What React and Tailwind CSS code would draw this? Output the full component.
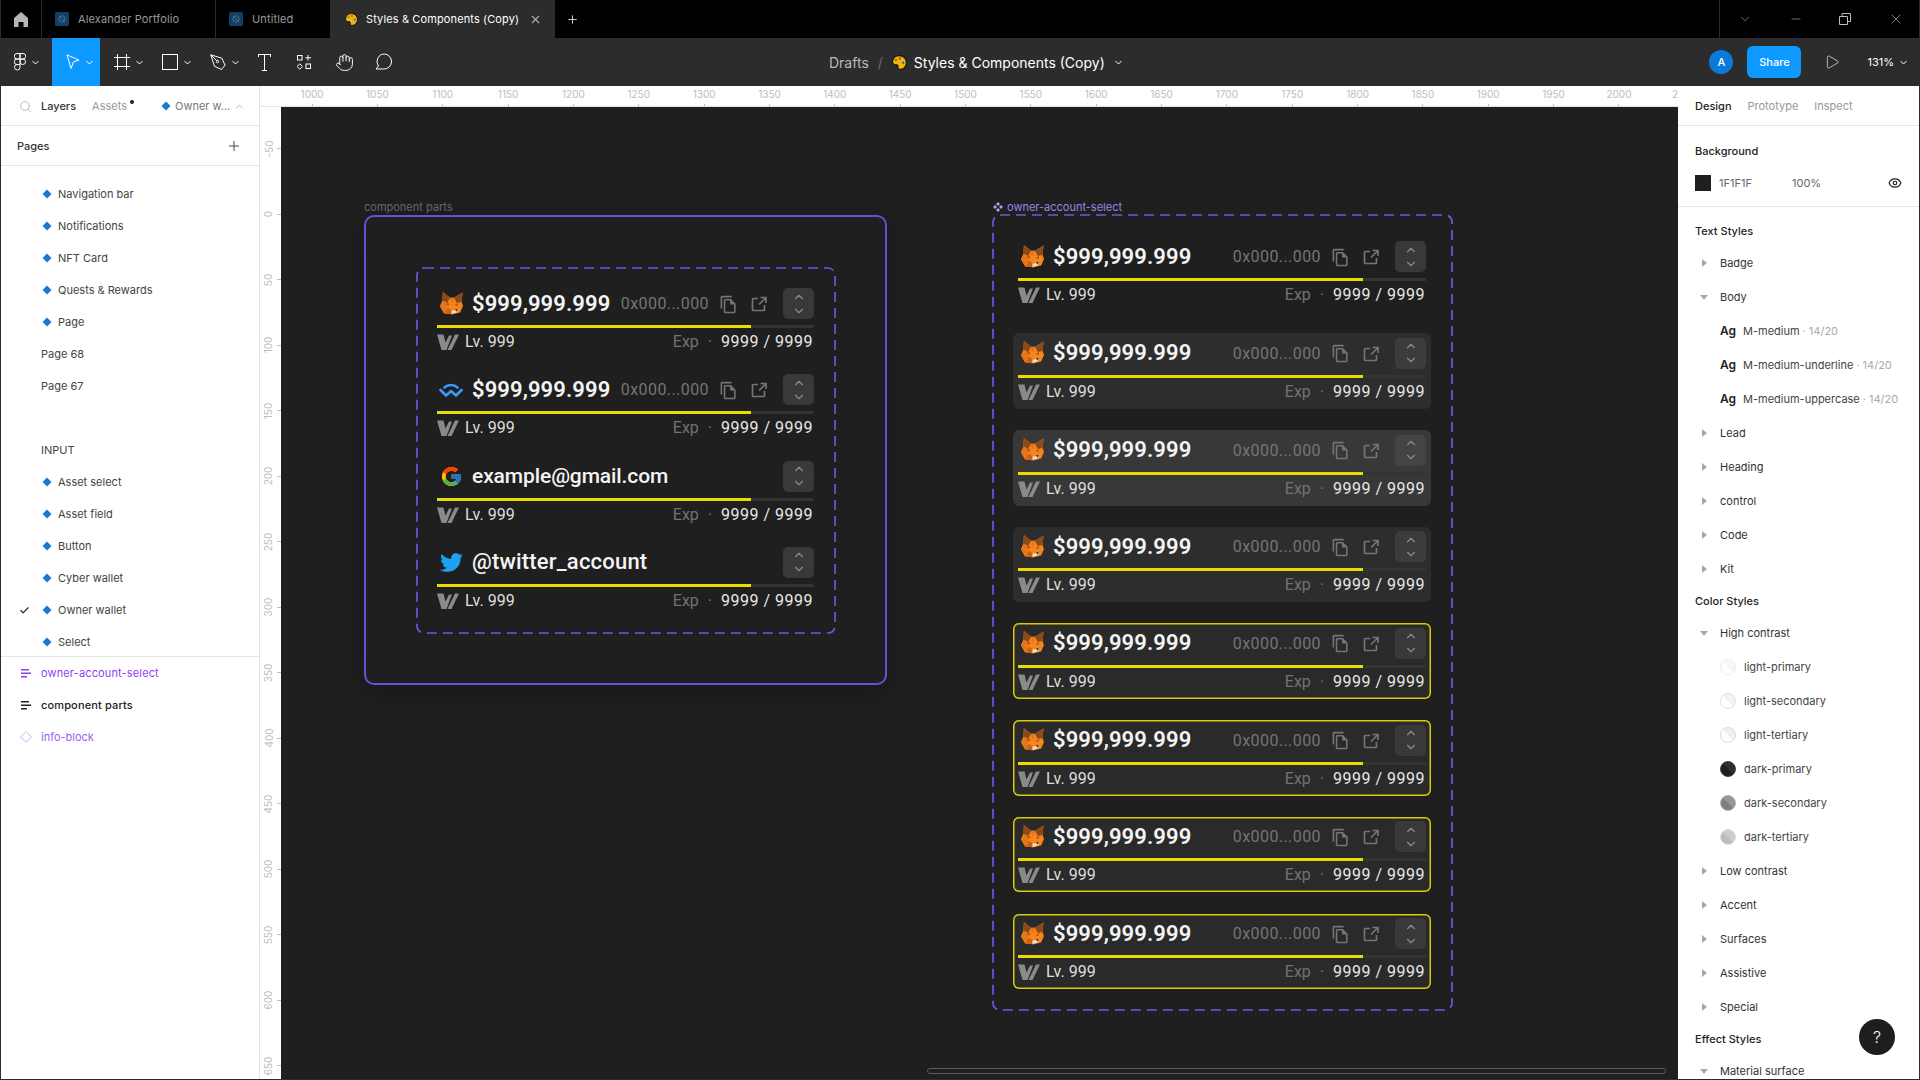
import { ChevronDown, ChevronUp, Check, Eye, Hand, Minus, Play, Plus, Search, X } from 'lucide-react';
import { FaTwitter } from 'react-icons/fa';
import { FcGoogle } from 'react-icons/fc';
import { MdOutlineFileCopy } from 'react-icons/md';

const pages = [
  { name: 'Navigation bar', icon: true },
  { name: 'Notifications', icon: true },
  { name: 'NFT Card', icon: true },
  { name: 'Quests & Rewards', icon: true },
  { name: 'Page', icon: true },
  { name: 'Page 68' },
  { name: 'Page 67' },
  { name: '' },
  { name: 'INPUT' },
  { name: 'Asset select', icon: true },
  { name: 'Asset field', icon: true },
  { name: 'Button', icon: true },
  { name: 'Cyber wallet', icon: true },
  { name: 'Owner wallet', icon: true, checked: true },
  { name: 'Select', icon: true },
];

const rulerX = [];
for (let v = 1000; v <= 2050; v += 50) rulerX.push(v);
const rulerY = [];
for (let v = -50; v <= 650; v += 50) rulerY.push(v);

const selected = 'bg-[#2a2a2a] ring-[1.5px] ring-inset ring-[#d8ca0c]';
const rowStates = [
  { row: '', stepper: 'bg-[#393939]' },
  { row: 'bg-[#2d2d2d]', stepper: 'bg-[#3c3c3c]' },
  { row: 'bg-[#383838]', stepper: 'bg-[#444444]' },
  { row: 'bg-[#2d2d2d]', stepper: 'bg-[#3c3c3c]' },
  { row: selected, stepper: 'bg-[#393939]' },
  { row: selected, stepper: 'bg-[#393939]' },
  { row: selected, stepper: 'bg-[#393939]' },
  { row: selected, stepper: 'bg-[#393939]' },
];

function Caret({ className = '' }) {
  return (
    <svg width="7" height="5" viewBox="0 0 7 5" className={`shrink-0 ${className}`} fill="none" stroke="currentColor" strokeWidth="1">
      <path d="M0.5 1l3 3 3-3" />
    </svg>
  );
}

function Diamond({ size = 10, fill = '#1b78d0', stroke = 'none' }) {
  return (
    <svg width={size} height={size} viewBox="0 0 10 10" className="shrink-0">
      <path d="M5 0.5L9.5 5 5 9.5 0.5 5z" fill={fill} stroke={stroke} strokeWidth="0.9" />
    </svg>
  );
}

function Palette({ size = 14 }) {
  return (
    <svg width={size} height={size} viewBox="0 0 14 14" className="shrink-0">
      <path d="M7 .6C3 .6.6 3.2.6 6.4c0 2.4 1.8 3 3.2 2.8 1.2-.2 2 .3 1.8 1.5-.3 1.4.3 2.7 2 2.7 3.5 0 5.8-3 5.8-6.4S10.700.6 7 .6z" fill="#f5b50a" stroke="#111" strokeWidth="1" />
      <circle cx="7.400" cy="3.200" r="1.100" fill="#d8342b" />
      <circle cx="3.800" cy="4.600" r="1.100" fill="#2e9e4a" />
      <circle cx="10.400" cy="7.200" r="1.200" fill="#2b6fd6" />
    </svg>
  );
}

function FileIcon() {
  return (
    <svg width="14" height="14" viewBox="0 0 14 14" className="shrink-0">
      <rect width="14" height="14" rx="1.500" fill="#123f66" />
      <circle cx="7" cy="7" r="3.200" fill="none" stroke="#4a6f8c" strokeWidth="1" />
      <path d="M4 4l6 6" stroke="#4a6f8c" strokeWidth="1" />
    </svg>
  );
}

function Tool({ active, children }) {
  return (
    <div className={`flex h-12 w-12 items-center gap-[6px] pl-[14px] text-white ${active ? 'bg-[#0d99ff]' : ''}`}>
      {children}
      <Caret />
    </div>
  );
}

function Fox() {
  return (
    <svg width="23" height="24" viewBox="0 0 24 24" className="-mt-[2px] shrink-0">
      <path d="M3 .5l7.500 6h4L23.500 1l-1 10 1.500 4-3 7-8.500 2-8.500-1.500L0 15.500 2.500 10z" fill="#f6851b" />
      <path d="M3 .5l7.500 6-3 5.500-5-2z" fill="#8a4a1c" />
      <path d="M23.500 1l-9 5.500 3 5.500 5-1z" fill="#8a4a1c" />
      <path d="M10.500 6.500h4L13 12l-2-.5z" fill="#e2761b" />
      <path d="M0 15.500L2.500 10l3 .5L8 17l-3 6.500-1-1z" fill="#e4761b" />
      <path d="M5 23.500l3-6.500 3.500 2 .5 4.500z" fill="#cd6116" />
      <path d="M6 13l2.500-1.500L10 14l-2.500.5z" fill="#b8540f" />
      <path d="M16 13.500l3-1.500-.5 2.500-2 .5z" fill="#b8540f" />
      <path d="M12 20l7-1.500-1.500 3.500-5.500 1.500z" fill="#e6dcd2" />
      <path d="M15.500 18.800l3-.5-1 2.500z" fill="#222" />
    </svg>
  );
}

function WalletConnect() {
  return (
    <svg width="24" height="16" viewBox="0 0 24 16" className="shrink-0" fill="none" stroke="#3b99fc" strokeWidth="2.600" strokeLinecap="round" strokeLinejoin="round">
      <path d="M5.500 5.500c3.500-3.300 9.500-3.300 13 0" />
      <path d="M1.500 8l5.500 5.500L12 9l5 4.500L22.500 8" />
    </svg>
  );
}

function LevelMark() {
  return (
    <svg width="22" height="16" viewBox="0 0 22 16" className="shrink-0" fill="#8a8a8a">
      <path d="M0 .5h6.500l2 8 3.500-7h3L9.500 16h-5z" />
      <path d="M10.500 16L18 .5h4L14.500 16z" />
    </svg>
  );
}

function ExternalIcon() {
  return (
    <svg width="16" height="16" viewBox="0 0 16 16" className="shrink-0" fill="none" stroke="currentColor" strokeWidth="1.700">
      <path d="M7 2.500H2.500a1 1 0 00-1 1v10a1 1 0 001 1h10a1 1 0 001-1V9" />
      <path d="M8 8.500l6.500-6.500M9.500 1.500h5.500V7" />
    </svg>
  );
}

function Account({ icon, title, titleClass = 'text-[22px] font-semibold tracking-[.1px]', address = true, stepper = 'bg-[#393939]', className = '' }) {
  return (
    <div className={`flex h-[75.5px] flex-col rounded-md px-[5px] pt-[4.5px] ${className}`}>
      <div className="flex h-[31px] items-center">
        <div className="ml-[2px] flex w-[24px] shrink-0 items-center justify-center">{icon}</div>
        <span className={`ml-[9px] font-['Roboto',sans-serif] leading-[26px] whitespace-nowrap text-[#f4f4f4] ${titleClass}`}>{title}</span>
        {address && (
          <div className="mt-[1px] ml-auto flex items-center text-[#757575]">
            <span className="font-['Roboto',sans-serif] text-[16px] leading-5 tracking-[.42px]">0x000...000</span>
            <MdOutlineFileCopy className="ml-[10px] text-[19px]" />
            <div className="ml-[13px]"><ExternalIcon /></div>
            <div className="ml-[15px] w-[1px]" />
          </div>
        )}
        <div className={`${address ? 'ml-0' : 'ml-auto'} flex h-[31px] w-[31px] shrink-0 flex-col items-center justify-center rounded-[5px] text-[#8a8a8a] ${stepper}`}>
          <ChevronUp size={14} strokeWidth={2} />
          <ChevronDown size={14} strokeWidth={2} />
        </div>
      </div>
      <div className="mt-[6px] flex h-[3px]">
        <div className="flex-1 bg-[#eadc00]" />
        <div className="w-[63px] bg-[#343434]" />
      </div>
      <div className="mt-[6px] flex h-[16px] items-center font-['Roboto',sans-serif] text-[16px] leading-5">
        <LevelMark />
        <span className="ml-[6px] text-[#dedede]">Lv. 999</span>
        <span className="ml-auto text-[#727272]">Exp</span>
        <span className="mx-[9px] text-[#727272]">·</span>
        <span className="mr-[1px] tracking-[.5px] text-[#e8e8e8]">9999 / 9999</span>
      </div>
    </div>
  );
}

function DashedBox({ width, height, children, className = '' }) {
  return (
    <div className={`relative shrink-0 ${className}`}>
      <svg width={width} height={height} className="absolute top-0 left-0" fill="none">
        <rect x="1" y="1" width={width - 2} height={height - 2} rx="7" stroke="#6f58e0" strokeWidth="1.700" strokeDasharray="10 6" />
      </svg>
      {children}
    </div>
  );
}

function Triangle({ open }) {
  return open ? (
    <svg width="8" height="5" viewBox="0 0 8 5" className="shrink-0"><path d="M0 0h8L4 5z" fill="#a8a8a8" /></svg>
  ) : (
    <svg width="5" height="8" viewBox="0 0 5 8" className="ml-[1px] shrink-0"><path d="M0 0l5 4-5 4z" fill="#a8a8a8" /></svg>
  );
}

function StyleGroup({ name, open }) {
  return (
    <div className="flex h-[34px] items-center text-[#333]">
      <div className="flex w-[25px] justify-center pr-[7px]"><Triangle open={open} /></div>
      <span>{name}</span>
    </div>
  );
}

function TextStyle({ name }) {
  return (
    <div className="flex h-[34px] items-center pl-[25px] text-[#444]">
      <span className="w-[23px] text-[12px] font-semibold text-[#222]">Ag</span>
      <span>{name}</span>
      <span className="ml-[3px] text-[#aaa]">· 14/20</span>
    </div>
  );
}

function ColorStyle({ name, base, line }) {
  return (
    <div className="flex h-[34px] items-center pl-[25px] text-[#444]">
      <svg width="16" height="16" viewBox="0 0 16 16" className="mr-[8px] shrink-0">
        <circle cx="8" cy="8" r="7.500" fill={base} stroke={line} strokeWidth="1" />
        <path d="M8 1a7 7 0 014.950 11.950L3.050 3.050A7 7 0 018 1z" fill={line} opacity="0.45" />
      </svg>
      <span>{name}</span>
    </div>
  );
}

function Heading({ children }) {
  return <div className="flex h-[30px] items-center font-medium text-[#1e1e1e]">{children}</div>;
}

function ListIcon({ color }) {
  return (
    <svg width="10" height="9" viewBox="0 0 10 9" className="shrink-0" fill={color}>
      <rect width="8" height="1.500" />
      <rect y="3.500" width="10" height="1.500" />
      <rect y="7" width="6" height="1.500" />
    </svg>
  );
}

export default function App() {
  return (
    <div className="flex h-screen w-screen flex-col overflow-hidden border-x border-b border-[#2c2c2c] bg-white font-['Inter',sans-serif] text-[11px]">
      {/* tab strip */}
      <div className="flex h-[38px] shrink-0 items-center bg-black text-[11px] tracking-[.12px] text-[#9a9a9a]">
        <div className="flex h-full w-[41px] items-center justify-center border-r border-[#2c2c2c]">
          <svg width="14" height="15" viewBox="0 0 14 15" fill="#b5b5b5"><path d="M7 0l7 6v9H9.500v-5h-5v5H0V6z" /></svg>
        </div>
        <div className="flex h-full w-[174px] items-center gap-[9px] border-r border-[#2c2c2c] pl-[13px]">
          <FileIcon />
          <span>Alexander Portfolio</span>
        </div>
        <div className="flex h-full w-[114px] items-center gap-[9px] pl-[13px]">
          <FileIcon />
          <span>Untitled</span>
        </div>
        <div className="flex h-full w-[225px] items-center bg-[#2c2c2c] pl-[15px] text-white">
          <Palette size={13} />
          <span className="ml-[8px] whitespace-nowrap">Styles &amp; Components (Copy)</span>
          <X size={13} className="ml-[10px] text-[#b0b0b0]" />
        </div>
        <Plus size={13} className="ml-[11px] text-[#c8c8c8]" />
        <div className="ml-auto flex h-full w-[200px] items-center border-l border-[#2c2c2c] text-[#bdbdbd]">
          <ChevronDown size={14} strokeWidth={1} className="ml-[18px]" />
          <Minus size={14} strokeWidth={1} className="ml-[37px]" />
          <svg width="12" height="12" viewBox="0 0 12 12" className="ml-[36px]" fill="none" stroke="currentColor"><path d="M.5 3.500h8v8h-8zM3 3.500v-3h8.500v8h-3" /></svg>
          <X size={16} strokeWidth={1} className="ml-[37px]" />
        </div>
      </div>

      {/* toolbar */}
      <div className="flex h-12 shrink-0 items-center bg-[#2c2c2c] text-white">
        <div className="flex h-12 w-[51px] items-center gap-[6px] pl-[13px]">
          <svg width="12" height="18" viewBox="0 0 12 18" fill="none" stroke="white" strokeWidth="1">
            <path d="M6 .5H3a2.750 2.750 0 000 5.500h3zM6 .5h3A2.750 2.750 0 019 6H6zM6 6H3a2.750 2.750 0 000 5.500h3zM6 11.500H3A2.750 2.750 0 106 14.250zM6 8.750a2.750 2.750 0 105.500 0 2.750 2.750 0 10-5.500 0z" />
          </svg>
          <Caret />
        </div>
        <Tool active>
          <svg width="14" height="16" viewBox="0 0 14 16" fill="none" stroke="white"><path d="M1 .8l12 5.400-5.500 1.600L5 14.500z" /></svg>
        </Tool>
        <Tool>
          <svg width="16" height="16" viewBox="0 0 16 16" fill="none" stroke="white"><path d="M3.500 0v16M12.500 0v16M0 3.500h16M0 12.500h16" /></svg>
        </Tool>
        <Tool>
          <svg width="16" height="16" viewBox="0 0 16 16" fill="none" stroke="white"><rect x=".5" y=".5" width="15" height="15" /></svg>
        </Tool>
        <Tool>
          <svg width="16" height="17" viewBox="0 0 16 17" fill="none" stroke="white"><path d="M.8.800l11 3.400 3.200 7-3.500 4.300-7-3.200zM.8.800l6 6" /><circle cx="7.500" cy="7.500" r="1.200" /></svg>
        </Tool>
        <div className="flex w-10 justify-center">
          <svg width="13" height="17" viewBox="0 0 13 17" fill="none" stroke="white"><path d="M0 .5h13M6.500.5v16M4 16.500h5M.5 0v3M12.500 0v3" /></svg>
        </div>
        <div className="flex w-10 justify-center">
          <svg width="15" height="15" viewBox="0 0 15 15" fill="none" stroke="white"><rect x=".5" y=".5" width="4.500" height="4.500" /><path d="M11 0v5.500M8.500 2.750H14" /><path d="M2.750 8.800l2.700 2.700-2.700 2.700-2.700-2.700z" /><rect x="9" y="9" width="4.500" height="4.500" /></svg>
        </div>
        <div className="flex w-10 justify-center"><Hand size={19} strokeWidth={1.200} /></div>
        <div className="flex w-10 justify-center">
          <svg width="18" height="18" viewBox="0 0 18 18" fill="none" stroke="white"><path d="M9.500 1a7.500 7.500 0 11-1 15H1l2.500-3A7.500 7.500 0 019.500 1z" /></svg>
        </div>
        <div className="ml-[425px] flex items-center text-[14px]">
          <span className="text-[#b9b9b9]">Drafts</span>
          <span className="mx-[9px] text-[#6d6d6d]">/</span>
          <Palette size={15} />
          <span className="ml-[7px] whitespace-nowrap">Styles &amp; Components (Copy)</span>
          <Caret className="ml-[10px]" />
        </div>
        <div className="ml-auto flex items-center">
          <div className="flex h-6 w-6 items-center justify-center rounded-full bg-[#0c7ad9] text-[11px] font-medium">A</div>
          <div className="ml-[14px] flex h-8 w-[54px] items-center justify-center rounded-md bg-[#0d99ff] font-medium">Share</div>
          <Play size={16} strokeWidth={1} className="ml-[23px]" />
          <span className="ml-[27px]">131%</span>
          <Caret className="mr-[12px] ml-[6px]" />
        </div>
      </div>

      <div className="flex min-h-0 flex-1">
        {/* layers panel */}
        <div className="flex w-[259px] shrink-0 flex-col border-r border-[#e5e5e5]">
          <div className="flex h-[40px] shrink-0 items-center border-b border-[#e5e5e5] pt-[1px]">
            <Search size={13} strokeWidth={1.200} className="ml-[18px] text-[#999]" />
            <span className="ml-[9px] font-medium text-[#333]">Layers</span>
            <span className="ml-[16px] text-[#999]">Assets</span>
            <span className="mb-[8px] ml-[3px] h-[4px] w-[4px] rounded-full bg-[#222]" />
            <span className="ml-[27px]"><Diamond /></span>
            <span className="ml-[4px] text-[#777]">Owner w...</span>
            <ChevronUp size={11} className="ml-[4px] text-[#aaa]" />
          </div>
          <div className="flex h-[40px] shrink-0 items-center justify-between border-b border-[#e5e5e5] pt-[1px] pr-[17px] pl-[16px]">
            <span className="font-medium text-[#333]">Pages</span>
            <Plus size={16} strokeWidth={1.200} className="text-[#222]" />
          </div>
          <div className="h-[491px] shrink-0 overflow-hidden border-b border-[#e5e5e5] pt-[12px]">
            {pages.map((p, i) => (
              <div key={i} className="flex h-8 items-center text-[#444]">
                <div className="flex w-[40px] justify-center pl-[6px]">{p.checked && <Check size={11} strokeWidth={2.500} className="text-[#222]" />}</div>
                {p.icon && <div className="mr-[6px] ml-[1px]"><Diamond /></div>}
                <span>{p.name}</span>
              </div>
            ))}
          </div>
          <div className="flex h-8 items-center pl-[20px] text-[#8f3ff0]">
            <ListIcon color="#8f3ff0" />
            <span className="ml-[10px] tracking-[.14px]">owner-account-select</span>
          </div>
          <div className="flex h-8 items-center pl-[20px] font-medium text-[#222]">
            <ListIcon color="#222" />
            <span className="ml-[10px] tracking-[.14px]">component parts</span>
          </div>
          <div className="flex h-8 items-center pl-[19px] text-[#9a62f0]">
            <Diamond size={12} fill="none" stroke="#e3c9f0" />
            <span className="ml-[9px]">info-block</span>
          </div>
        </div>

        {/* rulers + canvas */}
        <div className="flex min-w-0 flex-1 flex-col">
          <div className="flex h-[21px] shrink-0 overflow-hidden border-b border-[#e5e5e5] pl-[19.4px]">
            {rulerX.map((v) => (
              <div key={v} className="flex w-[65.35px] shrink-0 flex-col items-center pt-[2px]">
                <span className="text-[10px] leading-3 text-[#bdbdbd]">{v}</span>
                <span className="mt-[4px] h-[4px] w-px bg-[#bdbdbd]" />
              </div>
            ))}
          </div>
          <div className="flex min-h-0 flex-1">
            <div className="w-[21px] shrink-0 overflow-hidden pt-[9px]">
              {rulerY.map((v) => (
                <div key={v} className="flex h-[65.5px] items-center">
                  <div className="flex w-[17px] justify-center">
                    <span className="-rotate-90 text-[10px] leading-3 whitespace-nowrap text-[#bdbdbd]">{v}</span>
                  </div>
                  <span className="h-px w-[4px] bg-[#bdbdbd]" />
                </div>
              ))}
            </div>

            <div className="relative flex min-w-0 flex-1 items-start gap-[105px] overflow-hidden bg-[#1f1f1f] pt-[108px] pl-[83px]">
              <div className="relative h-[470px] w-[523px] shrink-0 rounded-[10px] border-2 border-[#6650d8] pt-[50px] pl-[50px] shadow-[0_6px_24px_rgba(0,0,0,0.25)]">
                <span className="absolute -top-[18px] -left-[2px] text-[11px] leading-4 text-[#666]">component parts</span>
                <DashedBox width={420} height={367} className="w-[420px]">
                  <div className="relative flex h-[367px] flex-col gap-[10.8px] pt-[16.6px] pr-[17px] pl-[16px]">
                    <Account icon={<Fox />} title="$999,999.999" />
                    <Account icon={<WalletConnect />} title="$999,999.999" />
                    <Account icon={<FcGoogle size={23} />} title="example@gmail.com" titleClass="text-[21px] tracking-[-.1px] font-medium" address={false} />
                    <Account icon={<FaTwitter size={23} color="#1da1f2" />} title="@twitter_account" titleClass="text-[22px] tracking-[.2px] font-medium" address={false} />
                  </div>
                </DashedBox>
              </div>

              <DashedBox width={461} height={797} className="-mt-[1px] w-[461px]">
                <div className="absolute -top-[15px] left-[1px] flex items-center gap-[4px] text-[11px] leading-4 text-[#9d83e8]">
                  <svg width="10" height="10" viewBox="0 0 10 10" fill="#b89ae8"><path d="M5 0l2 2-2 2-2-2zM2 3l2 2-2 2-2-2zM8 3l2 2-2 2-2-2zM5 6l2 2-2 2-2-2z" /></svg>
                  <span>owner-account-select</span>
                </div>
                <div className="relative flex h-[797px] flex-col gap-[21.2px] pt-[22.7px] pr-[22px] pl-[21px]">
                  {rowStates.map((s, i) => (
                    <Account key={i} icon={<Fox />} title="$999,999.999" className={s.row} stepper={s.stepper} />
                  ))}
                </div>
              </DashedBox>

              <div className="absolute bottom-[5px] left-[646px] h-[6px] w-[739px] rounded-full border border-[#5a5a5a]" />
            </div>
          </div>
        </div>

        {/* design panel */}
        <div className="relative flex w-[241px] shrink-0 flex-col">
          <div className="flex h-[40px] shrink-0 items-center border-b border-[#e5e5e5] pt-[1px] pl-[17px]">
            <span className="font-medium text-[#222]">Design</span>
            <span className="ml-[16px] text-[#999]">Prototype</span>
            <span className="ml-[16px] text-[#999]">Inspect</span>
          </div>
          <div className="h-[81px] shrink-0 border-b border-[#e5e5e5] pr-[17px] pl-[17px]">
            <div className="flex h-[50px] items-center font-medium text-[#222]">Background</div>
            <div className="-mt-[1px] flex items-center text-[#666]">
              <span className="h-4 w-4 bg-[#1f1f1f]" />
              <span className="ml-[8px] w-[73px]">1F1F1F</span>
              <span>100%</span>
              <Eye size={14} className="ml-auto text-[#222]" />
            </div>
          </div>
          <div className="min-h-0 flex-1 overflow-hidden pt-[9px] pl-[17px]">
            <Heading>Text Styles</Heading>
            <StyleGroup name="Badge" />
            <StyleGroup name="Body" open />
            <TextStyle name="M-medium" />
            <TextStyle name="M-medium-underline" />
            <TextStyle name="M-medium-uppercase" />
            <StyleGroup name="Lead" />
            <StyleGroup name="Heading" />
            <StyleGroup name="control" />
            <StyleGroup name="Code" />
            <StyleGroup name="Kit" />
            <Heading>Color Styles</Heading>
            <StyleGroup name="High contrast" open />
            <ColorStyle name="light-primary" base="#ffffff" line="#ececec" />
            <ColorStyle name="light-secondary" base="#ffffff" line="#e2e2e2" />
            <ColorStyle name="light-tertiary" base="#ffffff" line="#dcdcdc" />
            <ColorStyle name="dark-primary" base="#1e1e1e" line="#444444" />
            <ColorStyle name="dark-secondary" base="#7f7f7f" line="#b5b5b5" />
            <ColorStyle name="dark-tertiary" base="#bdbdbd" line="#dedede" />
            <StyleGroup name="Low contrast" />
            <StyleGroup name="Accent" />
            <StyleGroup name="Surfaces" />
            <StyleGroup name="Assistive" />
            <StyleGroup name="Special" />
            <Heading>Effect Styles</Heading>
            <StyleGroup name="Material surface" open />
          </div>
          <div className="absolute right-[24px] bottom-[24px] flex h-9 w-9 items-center justify-center rounded-full bg-[#1e1e1e] text-[16px] font-light text-white">?</div>
        </div>
      </div>
    </div>
  );
}
